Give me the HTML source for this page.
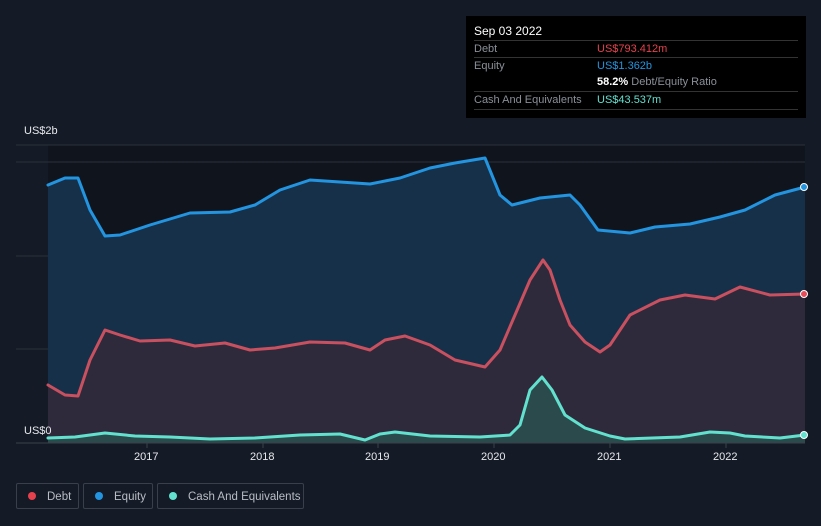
<!DOCTYPE html>
<html><head><style>
html,body{margin:0;width:821px;height:526px;overflow:hidden}
body{background:#151b26;font-family:"Liberation Sans",sans-serif;position:relative}
.tip{position:absolute;left:466px;top:16px;width:340px;height:102px;background:#000;color:#fff;font-size:11px}
.row{position:absolute;left:8px;width:324px;border-top:1px solid #333;height:17px;line-height:17px;color:#8a8f98}
.v{position:absolute;left:123px}
.leg{position:absolute;top:483px;height:26px;border:1px solid #3a404b;border-radius:2px;color:#b8bcc4;font-size:11.5px;line-height:26px;box-sizing:border-box;white-space:nowrap}
.dot{display:inline-block;width:8px;height:8px;border-radius:50%;margin:0 11px 0 11px}
.ax{position:absolute;color:#e6e8eb;font-size:11px}
</style></head><body>
<svg width="821" height="526" style="position:absolute;left:0;top:0">
<rect x="48" y="145" width="757" height="298" fill="#10141d"/>
<line x1="16" y1="145" x2="805" y2="145" stroke="#2a303b"/>
<line x1="16" y1="162" x2="805" y2="162" stroke="#2a303b"/>
<line x1="16" y1="256" x2="805" y2="256" stroke="#2a303b"/>
<line x1="16" y1="349" x2="805" y2="349" stroke="#2a303b"/>
<polygon fill="#17304a" points="48,185 65,178 78,178 90,210 105,236 120,235 150,225 190,213 230,212 255,205 280,190 310,180 340,182 370,184 400,178 430,168 455,163 485,158 500,195 512,205 540,198 570,195 580,205 598,230 630,233 655,227 690,224 720,217 745,210 775,195 805,187 805,443 48,443"/>
<polygon fill="#2e2a3c" points="48,385 65,395 78,396 90,360 105,330 120,335 140,341 170,340 195,346 225,343 250,350 275,348 310,342 345,343 370,350 385,340 405,336 430,345 455,360 485,367 500,350 515,315 530,280 543,260 550,270 560,300 570,325 585,342 600,352 610,345 630,315 660,300 685,295 715,299 740,287 770,295 805,294 805,443 48,443"/>
<polygon fill="#2a4a4c" points="48,438 75,437 105,433 135,436 170,437 210,439 255,438 300,435 340,434 365,440 380,434 395,432 430,436 480,437 510,435 520,425 530,390 542,377 552,390 565,415 585,428 610,436 625,439 680,437 710,432 730,433 745,436 780,438 805,435 805,443 48,443"/>
<g fill="none" stroke-width="3" stroke-linejoin="round" stroke-linecap="round">
<polyline stroke="#2394df" points="48,185 65,178 78,178 90,210 105,236 120,235 150,225 190,213 230,212 255,205 280,190 310,180 340,182 370,184 400,178 430,168 455,163 485,158 500,195 512,205 540,198 570,195 580,205 598,230 630,233 655,227 690,224 720,217 745,210 775,195 805,187"/>
<polyline stroke="#c9505f" points="48,385 65,395 78,396 90,360 105,330 120,335 140,341 170,340 195,346 225,343 250,350 275,348 310,342 345,343 370,350 385,340 405,336 430,345 455,360 485,367 500,350 515,315 530,280 543,260 550,270 560,300 570,325 585,342 600,352 610,345 630,315 660,300 685,295 715,299 740,287 770,295 805,294"/>
<polyline stroke="#62e1cf" points="48,438 75,437 105,433 135,436 170,437 210,439 255,438 300,435 340,434 365,440 380,434 395,432 430,436 480,437 510,435 520,425 530,390 542,377 552,390 565,415 585,428 610,436 625,439 680,437 710,432 730,433 745,436 780,438 805,435"/>
</g>
<line x1="16" y1="443" x2="805" y2="443" stroke="#3a404b"/>
<g stroke="#3a404b"><line x1="147" y1="443" x2="147" y2="448"/><line x1="263" y1="443" x2="263" y2="448"/><line x1="378" y1="443" x2="378" y2="448"/><line x1="494" y1="443" x2="494" y2="448"/><line x1="610" y1="443" x2="610" y2="448"/><line x1="726" y1="443" x2="726" y2="448"/></g>
<circle cx="804" cy="187" r="3.5" fill="#2394df" stroke="#fff" stroke-width="1"/>
<circle cx="804" cy="294" r="3.5" fill="#e64b57" stroke="#fff" stroke-width="1"/>
<circle cx="804" cy="435" r="3.5" fill="#62e1cf" stroke="#fff" stroke-width="1"/>
</svg>
<div class="ax" style="left:24px;top:125px">US$2b</div>
<div class="ax" style="left:24px;top:425px">US$0</div>
<div class="ax" style="left:134px;top:451px">2017</div>
<div class="ax" style="left:250px;top:451px">2018</div>
<div class="ax" style="left:365px;top:451px">2019</div>
<div class="ax" style="left:481px;top:451px">2020</div>
<div class="ax" style="left:597px;top:451px">2021</div>
<div class="ax" style="left:713px;top:451px">2022</div>
<div class="tip">
<div style="position:absolute;left:8px;top:8px;font-size:12px">Sep 03 2022</div>
<div class="row" style="top:24px">Debt<span class="v" style="color:#e5414d">US$793.412m</span></div>
<div class="row" style="top:41px">Equity<span class="v" style="color:#2394df">US$1.362b</span></div>
<div class="row" style="top:58px;border-top:none"><span class="v"><b style="color:#fff">58.2%</b> Debt/Equity Ratio</span></div>
<div class="row" style="top:75px">Cash And Equivalents<span class="v" style="color:#62e1cf">US$43.537m</span></div>
<div class="row" style="top:93px;height:0"></div>
</div>
<div class="leg" style="left:16px;width:63px"><span class="dot" style="background:#e5414d"></span>Debt</div>
<div class="leg" style="left:83px;width:70px"><span class="dot" style="background:#2394df"></span>Equity</div>
<div class="leg" style="left:157px;width:147px"><span class="dot" style="background:#62e1cf"></span>Cash And Equivalents</div>
</body></html>
